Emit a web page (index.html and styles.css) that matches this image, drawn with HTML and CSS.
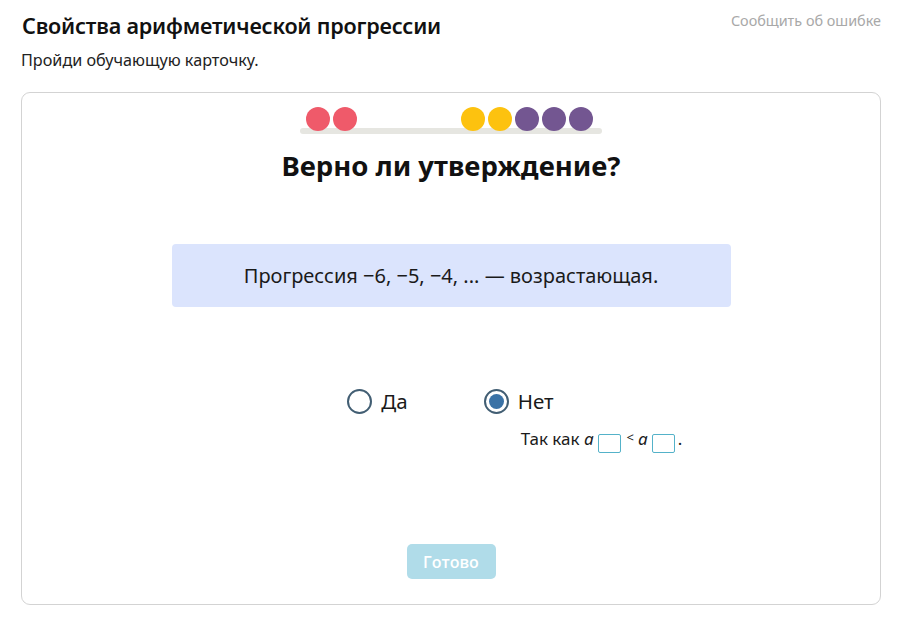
FILE: index.html
```html
<!DOCTYPE html>
<html lang="ru">
<head>
    <meta charset="UTF-8">
    <title>Свойства арифметической прогрессии</title>
    <link rel="stylesheet" href="styles.css">
</head>
<body>
    <div class="page">
        <div class="header">
            <h1>Свойства арифметической прогрессии</h1>
            <a class="report" href="#">Сообщить об ошибке</a>
        </div>
        <p class="intro">Пройди обучающую карточку.</p>

        <div class="card">
            <div class="progress">
                <div class="dots">
                    <div class="group">
                        <span class="dot red"></span>
                        <span class="dot red"></span>
                    </div>
                    <div class="group">
                        <span class="dot yellow"></span>
                        <span class="dot yellow"></span>
                        <span class="dot purple"></span>
                        <span class="dot purple"></span>
                        <span class="dot purple"></span>
                    </div>
                </div>
                <div class="track"></div>
            </div>

            <h2 class="question">Верно ли утверждение?</h2>

            <div class="statement">Прогрессия −6, −5, −4, ... — возрастающая.</div>

            <div class="answers">
                <label class="option">
                    <span class="radio"></span>
                    <span>Да</span>
                </label>
                <div class="option-wrap">
                    <label class="option">
                        <span class="radio checked"></span>
                        <span>Нет</span>
                    </label>
                    <div class="reason">
                        Так как <i>a</i><span class="blank"></span><span class="lt">&lt;</span><i>a</i><span class="blank"></span>.
                    </div>
                </div>
            </div>

            <button class="done" disabled>Готово</button>
        </div>
    </div>
</body>
</html>
```

FILE: styles.css
```css
body, html {
    margin: 0;
    padding: 0;
    background: #fff;
    font-family: "Noto Sans", "Open Sans", sans-serif;
    color: #1a1a1a;
}
.page {
    padding: 8px 28px 22px 21px;
}
.header {
    display: flex;
    justify-content: space-between;
    align-items: flex-start;
}
h1 {
    margin: 3px 0 0 1px;
    font-size: 21.6px;
    font-weight: 600;
    letter-spacing: -0.2px;
    color: #111;
}
.report {
    margin-top: 3px;
    font-size: 14.4px;
    color: #a8a8a8;
    text-decoration: none;
}
.intro {
    margin: 9px 0 21px 0;
    font-size: 16.2px;
    color: #222;
}
.card {
    border: 1px solid #d3d3d3;
    border-radius: 9px;
    height: 511px;
    display: flex;
    flex-direction: column;
    align-items: center;
}
.progress {
    width: 302px;
    margin-top: 14px;
}
.dots {
    display: flex;
    justify-content: space-between;
    padding: 0 9px 0 6px;
}
.group {
    display: flex;
    gap: 3px;
}
.dot {
    width: 24px;
    height: 24px;
    border-radius: 50%;
}
.red { background: #ef5a6a; }
.yellow { background: #fdc20f; }
.purple { background: #735691; }
.track {
    height: 6px;
    margin-top: -3px;
    background: #e6e6e1;
    border-radius: 3px;
}
.question {
    margin: 13px 0 0 0;
    font-size: 27.5px;
    font-weight: 700;
    color: #111;
}
.statement {
    margin-top: 60px;
    width: 559px;
    height: 63px;
    box-sizing: border-box;
    display: flex;
    align-items: center;
    justify-content: center;
    background: #dbe4fd;
    border-radius: 4px;
    font-size: 20px;
    color: #1a1a1a;
}
.answers {
    display: flex;
    gap: 76px;
    margin-top: 80px;
}
.option-wrap {
    width: 71px;
}
.option {
    display: flex;
    align-items: center;
    gap: 9px;
    font-size: 20.5px;
    color: #1a1a1a;
    height: 28px;
}
.radio {
    width: 21px;
    height: 21px;
    border: 2px solid #425e73;
    border-radius: 50%;
    display: flex;
    align-items: center;
    justify-content: center;
}
.radio.checked::after {
    content: "";
    width: 15px;
    height: 15px;
    border-radius: 50%;
    background: #3a72a6;
}
.reason {
    margin: 12px 0 0 37px;
    font-size: 17px;
    white-space: nowrap;
}
.blank {
    display: inline-block;
    width: 21px;
    height: 17px;
    border: 1px solid #54b2c9;
    border-radius: 2px;
    margin: 0 3px 0 4px;
    vertical-align: -8px;
}
.lt {
    font-size: 13px;
    vertical-align: 3px;
    margin: 0 4px 0 3px;
}
.done {
    margin-top: 91px;
    padding: 0;
    width: 89px;
    height: 35px;
    background: #b0dce9;
    color: #fff;
    border: none;
    border-radius: 5px;
    font-family: "Open Sans", sans-serif;
    font-size: 16px;
    font-weight: 600;
}
```
